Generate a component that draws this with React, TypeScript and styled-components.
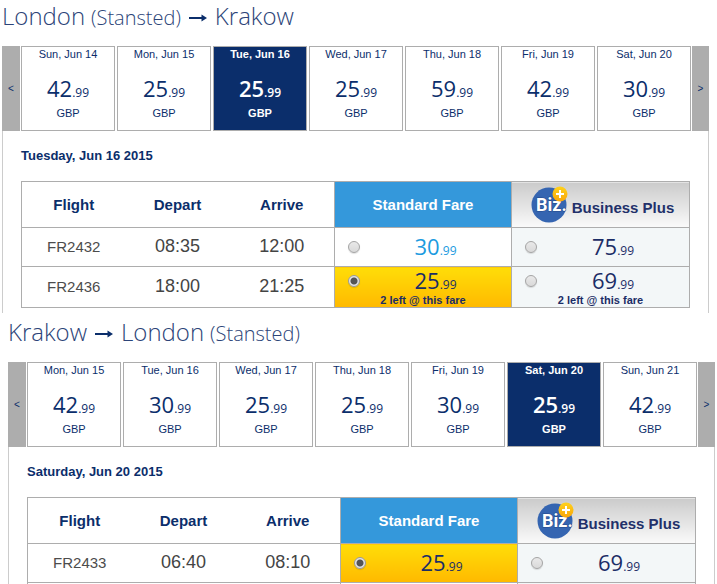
import React, { useState } from "react";
import styled, { createGlobalStyle, css } from "styled-components";

const navy = "#0b2e6b";
const line = "#adadad";

const GlobalStyle = createGlobalStyle`
  * { box-sizing: border-box; }
  html, body { margin: 0; background: #fff; }
  body { font-family: "Liberation Sans", Arial, sans-serif; color: ${navy}; }
  button, input { font: inherit; color: inherit; }
`;

const Page = styled.main`
  height: 100vh;
  overflow: hidden;
`;

const Leg = styled.section<{ $inset: boolean }>`
  margin: ${(p) => (p.$inset ? "3px 2px 0 8px" : "0 8px 0 2px")};
`;

const RouteTitle = styled.h2`
  display: flex;
  align-items: baseline;
  gap: 6px;
  height: 46px;
  margin: 0;
  color: #2c4478;
  font-family: "Open Sans", sans-serif;
  font-size: 24px;
  font-weight: 300;
  line-height: 32px;
`;

const Airport = styled.small`
  font-size: 20px;
`;

const RouteArrow = styled.svg`
  width: 20px;
  height: 12px;
  margin: 0 1px;
`;

const Carousel = styled.div`
  display: flex;
  gap: 1px;
  height: 85px;
`;

const Step = styled.button<{ $w: number }>`
  flex: 0 0 ${(p) => p.$w}px;
  padding: 0;
  border: 0;
  background: ${line};
  font-size: 10px;
  cursor: pointer;
`;

const Days = styled.div`
  flex: 1;
  display: grid;
  grid-template-columns: repeat(7, 1fr);
  gap: 2px;
`;

const Day = styled.button<{ $active: boolean }>`
  display: flex;
  flex-direction: column;
  align-items: center;
  padding: 1px 0 0;
  border: 1px solid ${line};
  background: #fff;
  font-size: 11px;
  line-height: 13px;
  cursor: pointer;
  ${(p) =>
    p.$active &&
    css`
      background: ${navy};
      color: #fff;
      font-weight: 700;
    `}
`;

const DayPrice = styled.span<{ $active: boolean }>`
  margin: 13px 0 5px;
  font-family: "Open Sans", sans-serif;
  font-size: 22px;
  line-height: 28px;
  font-weight: ${(p) => (p.$active ? 600 : 400)};
`;

const Cents = styled.span`
  font-size: 12px;
  line-height: 12px;
`;

const Panel = styled.div`
  padding: 16px 18px 5px;
  border: solid #ccc;
  border-width: 0 1px;
`;

const DateTitle = styled.h3`
  margin: 0 0 17px;
  font-size: 13px;
  line-height: 17px;
`;

const Flights = styled.table`
  width: 100%;
  table-layout: fixed;
  border-collapse: collapse;
  border: 1px solid ${line};
  text-align: center;
`;

const Column = styled.col<{ $w: number }>`
  width: ${(p) => p.$w}px;
`;

const Head = styled.th<{ $kind?: "standard" | "business" }>`
  height: 46px;
  padding: 0;
  border-bottom: 1px solid ${line};
  font-size: 15px;
  line-height: 18px;
  ${(p) =>
    p.$kind === "standard" &&
    css`
      border: 1px solid ${line};
      background: #3498db;
      color: #fff;
    `}
  ${(p) =>
    p.$kind === "business" &&
    css`
      border: 1px solid ${line};
      background: linear-gradient(#cbcbcb, #fafafa);
      color: #22306a;
    `}
`;

const Business = styled.span`
  display: flex;
  align-items: center;
  justify-content: center;
  gap: 4px;
  padding-left: 4px;
`;

const BusinessName = styled.span`
  padding-top: 6px;
`;

const Row = styled.tr`
  height: 39px;
  border-bottom: 1px solid ${line};
`;

const FlightNo = styled.td`
  padding: 0 0 2px;
  color: #4c4c4c;
  font-size: 15px;
`;

const Time = styled.td`
  padding: 0 0 2px;
  color: #444;
  font-size: 18px;
`;

const FareCell = styled.td<{ $business: boolean; $picked: boolean }>`
  padding: 0;
  border: 1px solid ${line};
  color: ${(p) => (p.$business || p.$picked ? "#1b2d66" : "#1b9be0")};
  background: ${(p) =>
    p.$picked
      ? "linear-gradient(#ffdd08, #ffb900)"
      : p.$business
        ? "#f3f7f8"
        : "#fff"};
`;

const FareLabel = styled.label`
  display: block;
  cursor: pointer;
`;

const FareLine = styled.span`
  display: flex;
  align-items: center;
  padding-left: 13px;
`;

const Radio = styled.input`
  appearance: none;
  width: 12px;
  height: 12px;
  margin: 0;
  border: 1px solid #a5a5a5;
  border-radius: 50%;
  background: linear-gradient(#e9e9e9, #d9d9d9);
  box-shadow: 0 1px 1px rgba(0, 0, 0, 0.12);
  &:checked {
    border-color: #999;
    background: radial-gradient(circle, #555 0 3px, #e4e4e4 4px);
  }
`;

const FarePrice = styled.span`
  flex: 1;
  padding-bottom: 2px;
  font-family: "Open Sans", sans-serif;
  font-size: 22px;
  line-height: 26px;
`;

const SeatsLeft = styled.strong`
  display: block;
  padding-bottom: 2px;
  font-size: 11px;
  line-height: 10px;
`;

function Arrow() {
  return (
    <RouteArrow viewBox="0 0 20 12" role="img" aria-label="to">
      <path d="M1 4H13.500V1.500L19 5L13.500 8.500V6H1Z" fill={navy} />
    </RouteArrow>
  );
}

const Logo = styled.svg`
  flex: none;
  width: 37px;
  height: 37px;
`;

function BizLogo() {
  return (
    <Logo viewBox="0 0 37 37" aria-hidden="true">
      <defs>
        <linearGradient id="gold" x1="0" y1="0" x2="0" y2="1">
          <stop offset="0" stopColor="#ffd21a" />
          <stop offset="1" stopColor="#f9a60c" />
        </linearGradient>
      </defs>
      <circle cx="18" cy="19" r="17.500" fill="#3565b1" />
      <text
        x="5"
        y="25"
        fill="#fff"
        stroke="#24498a"
        strokeWidth="1"
        paintOrder="stroke"
        fontFamily="Roboto, sans-serif"
        fontWeight="700"
        fontSize="18"
      >
        Biz.
      </text>
      <circle cx="29" cy="8" r="7.500" fill="url(#gold)" />
      <path d="M29 4V12M25 8H33" stroke="#fff" strokeWidth="2" />
    </Logo>
  );
}

type Fare = { price: string; left?: number };
type Flight = { no: string; depart: string; arrive: string; fares: [Fare, Fare] };
type LegData = {
  id: string;
  title: React.ReactNode;
  days: [string, string][];
  activeDay: number;
  date: string;
  flights: Flight[];
  picked: string;
  more?: boolean;
};

function Price({ value }: { value: string }) {
  const [whole, cents] = value.split(".");
  return (
    <>
      {whole}
      <Cents>.{cents}</Cents>
    </>
  );
}

function JourneyLeg({ leg, inset }: { leg: LegData; inset: boolean }) {
  const [day, setDay] = useState(leg.activeDay);
  const [picked, setPicked] = useState(leg.picked);
  return (
    <Leg $inset={inset}>
      <RouteTitle>{leg.title}</RouteTitle>
      <Carousel>
        <Step type="button" $w={18} aria-label="Earlier dates">&lt;</Step>
        <Days>
          {leg.days.map(([name, price], i) => (
            <Day key={name} type="button" $active={i === day} aria-pressed={i === day} onClick={() => setDay(i)}>
              <span>{name}</span>
              <DayPrice $active={i === day}>
                <Price value={price} />
              </DayPrice>
              <span>GBP</span>
            </Day>
          ))}
        </Days>
        <Step type="button" $w={17} aria-label="Later dates">&gt;</Step>
      </Carousel>
      <Panel>
        <DateTitle>{leg.date}</DateTitle>
        <Flights>
          <colgroup>
            <Column $w={104} />
            <Column $w={104} />
            <Column $w={105} />
            <Column $w={177} />
            <Column $w={178} />
          </colgroup>
          <thead>
            <tr>
              <Head scope="col">Flight</Head>
              <Head scope="col">Depart</Head>
              <Head scope="col">Arrive</Head>
              <Head scope="col" $kind="standard">Standard Fare</Head>
              <Head scope="col" $kind="business">
                <Business>
                  <BizLogo />
                  <BusinessName>Business Plus</BusinessName>
                </Business>
              </Head>
            </tr>
          </thead>
          <tbody>
            {leg.flights.map((f) => (
              <Row key={f.no}>
                <FlightNo>{f.no}</FlightNo>
                <Time>{f.depart}</Time>
                <Time>{f.arrive}</Time>
                {f.fares.map((fare, i) => {
                  const key = `${f.no}-${i}`;
                  return (
                    <FareCell key={key} $business={i === 1} $picked={picked === key}>
                      <FareLabel>
                        <FareLine>
                          <Radio
                            type="radio"
                            name={leg.id}
                            checked={picked === key}
                            onChange={() => setPicked(key)}
                          />
                          <FarePrice>
                            <Price value={fare.price} />
                          </FarePrice>
                        </FareLine>
                        {fare.left && <SeatsLeft>{fare.left} left @ this fare</SeatsLeft>}
                      </FareLabel>
                    </FareCell>
                  );
                })}
              </Row>
            ))}
            {leg.more && (
              <Row>
                <FlightNo />
                <Time />
                <Time />
                <FareCell $business={false} $picked={false} />
                <FareCell $business $picked={false} />
              </Row>
            )}
          </tbody>
        </Flights>
      </Panel>
    </Leg>
  );
}

const legs: LegData[] = [
  {
    id: "outbound",
    title: (
      <>
        <span>London</span>
        <Airport>(Stansted)</Airport>
        <Arrow />
        <span>Krakow</span>
      </>
    ),
    days: [
      ["Sun, Jun 14", "42.99"],
      ["Mon, Jun 15", "25.99"],
      ["Tue, Jun 16", "25.99"],
      ["Wed, Jun 17", "25.99"],
      ["Thu, Jun 18", "59.99"],
      ["Fri, Jun 19", "42.99"],
      ["Sat, Jun 20", "30.99"],
    ],
    activeDay: 2,
    date: "Tuesday, Jun 16 2015",
    flights: [
      { no: "FR2432", depart: "08:35", arrive: "12:00", fares: [{ price: "30.99" }, { price: "75.99" }] },
      { no: "FR2436", depart: "18:00", arrive: "21:25", fares: [{ price: "25.99", left: 2 }, { price: "69.99", left: 2 }] },
    ],
    picked: "FR2436-0",
  },
  {
    id: "return",
    title: (
      <>
        <span>Krakow</span>
        <Arrow />
        <span>London</span>
        <Airport>(Stansted)</Airport>
      </>
    ),
    days: [
      ["Mon, Jun 15", "42.99"],
      ["Tue, Jun 16", "30.99"],
      ["Wed, Jun 17", "25.99"],
      ["Thu, Jun 18", "25.99"],
      ["Fri, Jun 19", "30.99"],
      ["Sat, Jun 20", "25.99"],
      ["Sun, Jun 21", "42.99"],
    ],
    activeDay: 5,
    date: "Saturday, Jun 20 2015",
    flights: [
      { no: "FR2433", depart: "06:40", arrive: "08:10", fares: [{ price: "25.99" }, { price: "69.99" }] },
    ],
    picked: "FR2433-0",
    more: true,
  },
];

export default function App() {
  return (
    <>
      <GlobalStyle />
      <Page>
        {legs.map((leg, i) => (
          <JourneyLeg key={leg.id} leg={leg} inset={i > 0} />
        ))}
      </Page>
    </>
  );
}
